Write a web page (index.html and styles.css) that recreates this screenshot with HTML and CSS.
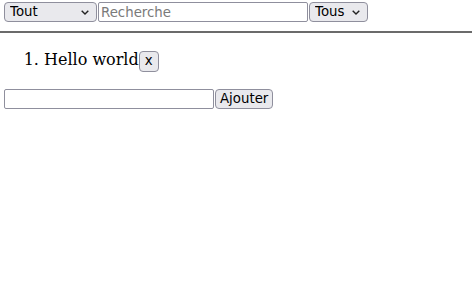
FILE: index.html
```html
<!DOCTYPE html>
<html lang="fr">
<head>
  <meta charset="UTF-8">
  <title>Liste</title>
  <link rel="stylesheet" href="styles.css">
</head>
<body>
  <div class="toolbar">
    <select class="control filter-type">
      <option>Tout</option>
    </select>
    <input class="field search" type="text" placeholder="Recherche">
    <select class="control filter-state">
      <option>Tous</option>
    </select>
  </div>
  <hr>
  <ol class="items">
    <li>Hello world<button class="control remove">x</button></li>
  </ol>
  <form class="add-form">
    <input class="field new-item" type="text"><button class="control add" type="button">Ajouter</button>
  </form>
</body>
</html>
```

FILE: styles.css
```css
body {
  margin: 0;
  font-family: "DejaVu Serif", serif;
  color: #000;
}
select, input, button {
  font-family: "DejaVu Sans", sans-serif;
  font-size: 13.33px;
  margin: 0;
  box-sizing: border-box;
  color: #000;
}
.control {
  background-color: #e9e9ed;
  border: 1px solid #8f8f9d;
  border-radius: 4px;
  padding: 1px 5px;
  height: 20px;
  line-height: 16px;
}
select.control {
  appearance: none;
  -webkit-appearance: none;
  padding-left: 5px;
  background-image: url("data:image/svg+xml,%3Csvg xmlns='http://www.w3.org/2000/svg' width='8' height='5' viewBox='0 0 8 5'%3E%3Cpath d='M0.7 0.7 L4 4 L7.3 0.7' fill='none' stroke='%23222' stroke-width='1.4'/%3E%3C/svg%3E");
  background-repeat: no-repeat;
  background-position: right 7px center;
}
.field {
  background: #fff;
  border: 1px solid #8f8f9d;
  border-radius: 2px;
  height: 20px;
  padding: 1px 2px;
}
.field::placeholder {
  color: #7a7a7a;
}
.toolbar {
  display: flex;
  align-items: center;
  padding: 2px 4px;
}
.filter-type {
  width: 93px;
}
.search {
  width: 210px;
  margin-left: 1px;
}
.filter-state {
  width: 59px;
  margin-left: 1px;
}
hr {
  border: none;
  height: 2px;
  background: #6b6b6b;
  margin: 7px 0 0;
}
.items {
  margin: 16px 0 17px;
  padding-left: 44px;
  line-height: 21px;
}
.remove {
  height: 21px;
  padding: 1px 5px;
}
.add-form {
  display: flex;
  padding: 0 4px;
}
.new-item {
  width: 210px;
  margin-right: 1px;
}
.add {
  padding: 1px 4px;
}
```
